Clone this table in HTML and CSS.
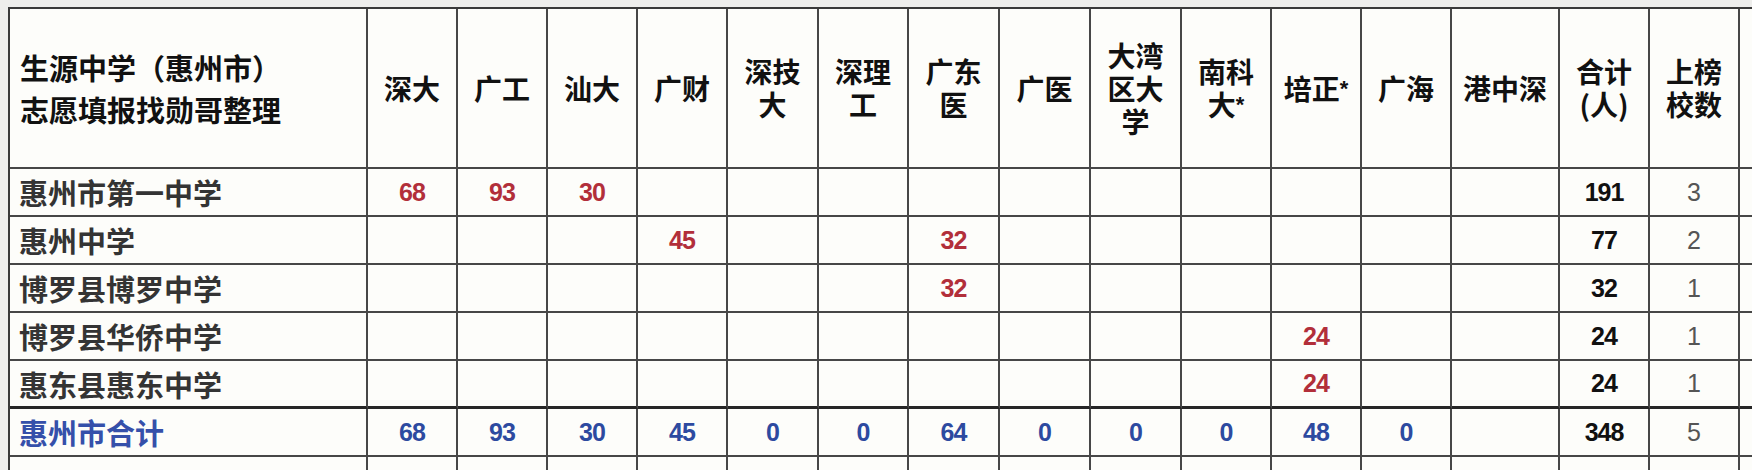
FILE: index.html
```html
<!DOCTYPE html>
<html lang="zh-CN">
<head>
<meta charset="utf-8">
<title>生源中学（惠州市）</title>
<link rel="stylesheet" href="styles.css">
</head>
<body>
<table class="sheet">
  <colgroup>
    <col class="col-name">
    <col class="col-uni"><col class="col-uni"><col class="col-uni"><col class="col-uni">
    <col class="col-uni plus"><col class="col-uni"><col class="col-uni plus"><col class="col-uni plus">
    <col class="col-uni plus"><col class="col-uni"><col class="col-uni"><col class="col-uni">
    <col class="col-wide">
    <col class="col-uni"><col class="col-uni"><col class="col-uni">
  </colgroup>
  <thead>
    <tr class="head">
      <th class="title">生源中学（惠州市）<br>志愿填报找勋哥整理</th>
      <th>深大</th>
      <th>广工</th>
      <th>汕大</th>
      <th>广财</th>
      <th>深技<br>大</th>
      <th>深理<br>工</th>
      <th>广东<br>医</th>
      <th>广医</th>
      <th>大湾<br>区大<br>学</th>
      <th>南科<br>大<span class="star">*</span></th>
      <th>培正<span class="star">*</span></th>
      <th>广海</th>
      <th>港中深</th>
      <th>合计<br>(人)</th>
      <th>上榜<br>校数</th>
      <th></th>
    </tr>
  </thead>
  <tbody>
    <tr>
      <td class="name">惠州市第一中学</td>
      <td class="num red">68</td><td class="num red">93</td><td class="num red">30</td><td></td>
      <td></td><td></td><td></td><td></td>
      <td></td><td></td><td></td><td></td>
      <td></td>
      <td class="num total">191</td><td class="count">3</td><td></td>
    </tr>
    <tr>
      <td class="name">惠州中学</td>
      <td></td><td></td><td></td><td class="num red">45</td>
      <td></td><td></td><td class="num red">32</td><td></td>
      <td></td><td></td><td></td><td></td>
      <td></td>
      <td class="num total">77</td><td class="count">2</td><td></td>
    </tr>
    <tr>
      <td class="name">博罗县博罗中学</td>
      <td></td><td></td><td></td><td></td>
      <td></td><td></td><td class="num red">32</td><td></td>
      <td></td><td></td><td></td><td></td>
      <td></td>
      <td class="num total">32</td><td class="count">1</td><td></td>
    </tr>
    <tr>
      <td class="name">博罗县华侨中学</td>
      <td></td><td></td><td></td><td></td>
      <td></td><td></td><td></td><td></td>
      <td></td><td></td><td class="num red">24</td><td></td>
      <td></td>
      <td class="num total">24</td><td class="count">1</td><td></td>
    </tr>
    <tr class="pre-sum">
      <td class="name">惠东县惠东中学</td>
      <td></td><td></td><td></td><td></td>
      <td></td><td></td><td></td><td></td>
      <td></td><td></td><td class="num red">24</td><td></td>
      <td></td>
      <td class="num total">24</td><td class="count">1</td><td></td>
    </tr>
    <tr class="sum">
      <td class="name blue">惠州市合计</td>
      <td class="num blue">68</td><td class="num blue">93</td><td class="num blue">30</td><td class="num blue">45</td>
      <td class="num blue">0</td><td class="num blue">0</td><td class="num blue">64</td><td class="num blue">0</td>
      <td class="num blue">0</td><td class="num blue">0</td><td class="num blue">48</td><td class="num blue">0</td>
      <td></td>
      <td class="num total">348</td><td class="count">5</td><td></td>
    </tr>
    <tr>
      <td class="name"></td>
      <td></td><td></td><td></td><td></td>
      <td></td><td></td><td></td><td></td>
      <td></td><td></td><td></td><td></td>
      <td></td>
      <td></td><td></td><td></td>
    </tr>
  </tbody>
</table>
</body>
</html>
```

FILE: styles.css
```css
html, body {
  margin: 0;
  overflow: hidden;
  background: #eeeeec;
}

body {
  padding: 7px 0 0 8px;
}

.sheet {
  border-collapse: separate;
  border-spacing: 0;
  table-layout: fixed;
  width: 1822px;
  background: #fdfdfa;
  border-top: 2px solid #3a3a3a;
  border-left: 2px solid #3a3a3a;
  font-family: "Liberation Sans", "Noto Sans CJK SC", sans-serif;
}

.col-name { width: 358px; }
.col-uni { width: 90px; }
.col-uni.plus { width: 91px; }
.col-wide { width: 108px; }

.sheet th,
.sheet td {
  box-sizing: border-box;
  padding: 0;
  border-right: 2px solid #474747;
  border-bottom: 2px solid #474747;
  text-align: center;
  vertical-align: middle;
  white-space: nowrap;
}

.head th {
  height: 160px;
  font-family: "Noto Sans CJK SC", "Liberation Sans", sans-serif;
  font-weight: 700;
  font-size: 28px;
  line-height: 33px;
  color: #111;
}

.head th.title {
  text-align: left;
  padding-left: 10px;
  font-size: 29px;
  line-height: 42px;
}

.star {
  font-family: "Liberation Sans", sans-serif;
  font-size: 22px;
  vertical-align: 4px;
}

.sheet tbody td {
  height: 48px;
}

.pre-sum td {
  border-bottom: 3px solid #262626;
}

.name {
  font-family: "Noto Sans CJK SC", sans-serif;
  font-size: 29px;
  font-weight: 700;
  color: #343434;
}

.sheet td.name {
  text-align: left;
  padding-left: 9px;
}

.num {
  font-size: 25px;
  font-weight: 700;
  letter-spacing: -1px;
}

.red { color: #b22f3a; }
.blue { color: #2d4aa0; }
.name.blue { color: #3550aa; }

.total { color: #111; }

.count {
  font-size: 25px;
  font-weight: 400;
  color: #555;
}
```
